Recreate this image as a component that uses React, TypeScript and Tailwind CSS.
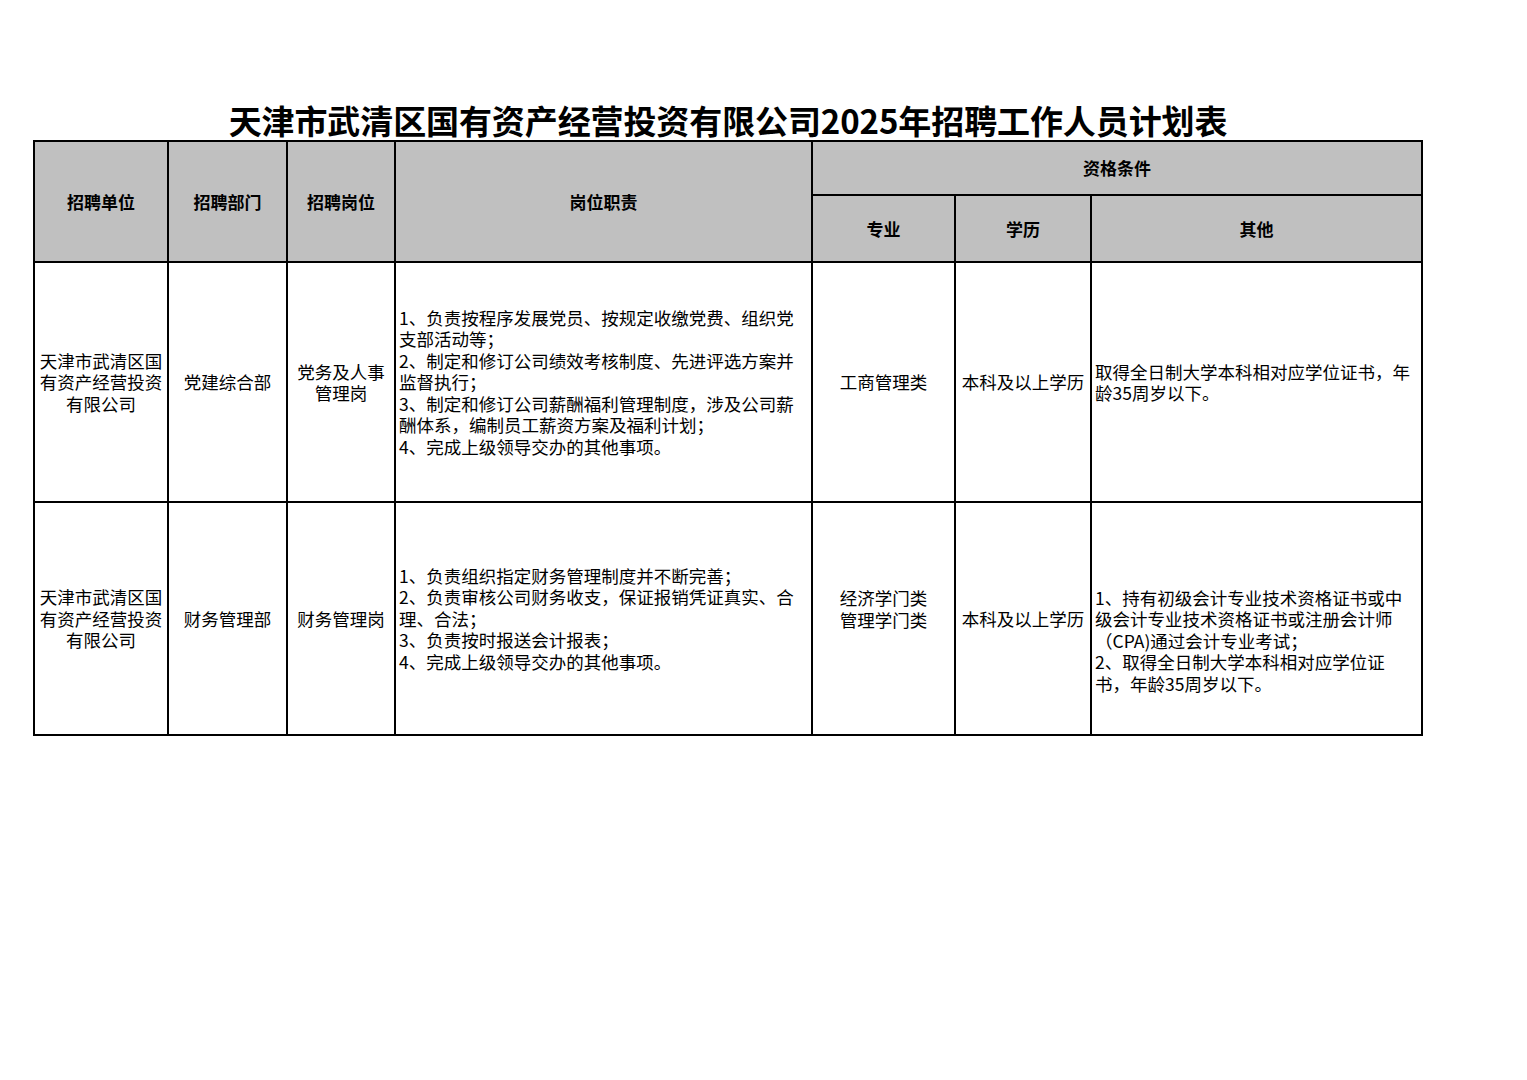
import React from "react";

const font = { fontFamily: '"Noto Sans CJK SC", "Noto Sans", sans-serif' };

function Lines({ lines }: { lines: string[] }) {
    return (
        <div>
            {lines.map((l, i) => (
                <div key={i} className="whitespace-nowrap">
                    {l}
                </div>
            ))}
        </div>
    );
}

const head = "bg-[#c0c0c0] flex items-center justify-center text-center font-semibold text-[17px] text-black";
const mid = "bg-white flex items-center justify-center text-center";
const left = "bg-white flex items-center justify-start text-left px-[3px]";

export default function App() {
    return (
        <div className="w-[1527px] h-[1080px] bg-white text-black" style={font}>
            <div className="ml-[33px] w-[1390px] pt-[101px]">
                <h1 className="text-center text-[33px] leading-[38px] font-semibold tracking-[-0.1px]">
                    天津市武清区国有资产经营投资有限公司2025年招聘工作人员计划表
                </h1>

                <div className="mt-[1px] grid grid-cols-[132px_117px_106px_415px_141px_134px_329px] grid-rows-[52px_65px_238px_231px] gap-[2px] bg-black p-[2px] text-[17.5px] leading-[21.4px]">
                    <div className={`${head} row-span-2`}>招聘单位</div>
                    <div className={`${head} row-span-2`}>招聘部门</div>
                    <div className={`${head} row-span-2`}>招聘岗位</div>
                    <div className={`${head} row-span-2`}>岗位职责</div>
                    <div className={`${head} col-span-3`}>资格条件</div>
                    <div className={head}>专业</div>
                    <div className={head}>学历</div>
                    <div className={head}>其他</div>

                    {/* row 1 */}
                    <div className={mid}>
                        <Lines lines={["天津市武清区国", "有资产经营投资", "有限公司"]} />
                    </div>
                    <div className={mid}>党建综合部</div>
                    <div className={mid}>
                        <Lines lines={["党务及人事", "管理岗"]} />
                    </div>
                    <div className={left}>
                        <Lines
                            lines={[
                                "1、负责按程序发展党员、按规定收缴党费、组织党",
                                "支部活动等；",
                                "2、制定和修订公司绩效考核制度、先进评选方案并",
                                "监督执行；",
                                "3、制定和修订公司薪酬福利管理制度，涉及公司薪",
                                "酬体系，编制员工薪资方案及福利计划；",
                                "4、完成上级领导交办的其他事项。",
                            ]}
                        />
                    </div>
                    <div className={mid}>工商管理类</div>
                    <div className={mid}>本科及以上学历</div>
                    <div className={left}>
                        <Lines lines={["取得全日制大学本科相对应学位证书，年", "龄35周岁以下。"]} />
                    </div>

                    {/* row 2 */}
                    <div className={mid}>
                        <Lines lines={["天津市武清区国", "有资产经营投资", "有限公司"]} />
                    </div>
                    <div className={mid}>财务管理部</div>
                    <div className={mid}>财务管理岗</div>
                    <div className={left}>
                        <Lines
                            lines={[
                                "1、负责组织指定财务管理制度并不断完善；",
                                "2、负责审核公司财务收支，保证报销凭证真实、合",
                                "理、合法；",
                                "3、负责按时报送会计报表；",
                                "4、完成上级领导交办的其他事项。",
                            ]}
                        />
                    </div>
                    <div className={`${mid} pb-[20px]`}>
                        <Lines lines={["经济学门类", "管理学门类"]} />
                    </div>
                    <div className={mid}>本科及以上学历</div>
                    <div className={`${left} pt-[44px]`}>
                        <Lines
                            lines={[
                                "1、持有初级会计专业技术资格证书或中",
                                "级会计专业技术资格证书或注册会计师",
                                "（CPA)通过会计专业考试；",
                                "2、取得全日制大学本科相对应学位证",
                                "书，年龄35周岁以下。",
                            ]}
                        />
                    </div>
                </div>
            </div>
        </div>
    );
}
